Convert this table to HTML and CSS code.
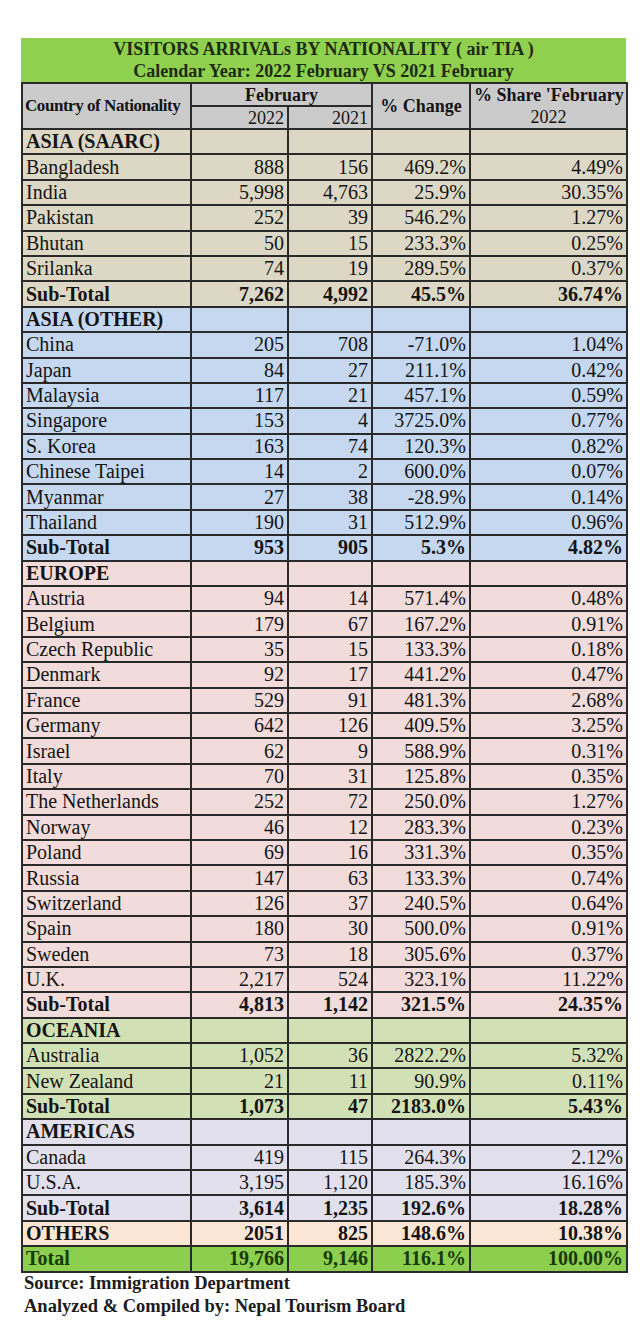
FILE: index.html
```html
<!DOCTYPE html>
<html>
<head>
<meta charset="utf-8">
<link rel="stylesheet" href="styles.css">
</head>
<body>
<div class="sheet">
  <div class="title">
    <div>VISITORS ARRIVALs BY NATIONALITY ( air TIA )</div>
    <div>Calendar Year: 2022 February VS 2021 February</div>
  </div>
  <table class="stats">
    <colgroup>
      <col class="c1"><col class="c2"><col class="c3"><col class="c4"><col class="c5">
    </colgroup>
    <thead>
      <tr class="h1">
        <th rowspan="2" class="left country">Country of Nationality</th>
        <th colspan="2" class="center">February</th>
        <th rowspan="2" class="center">% Change</th>
        <th rowspan="2" class="center share">% Share 'February<br><span class="yr">2022</span></th>
      </tr>
      <tr class="h2">
        <th class="num yr">2022</th>
        <th class="num yr">2021</th>
      </tr>
    </thead>
    <tbody class="saarc">
      <tr class="region"><td>ASIA (SAARC)</td><td></td><td></td><td></td><td></td></tr>
      <tr><td>Bangladesh</td><td>888</td><td>156</td><td>469.2%</td><td>4.49%</td></tr>
      <tr><td>India</td><td>5,998</td><td>4,763</td><td>25.9%</td><td>30.35%</td></tr>
      <tr><td>Pakistan</td><td>252</td><td>39</td><td>546.2%</td><td>1.27%</td></tr>
      <tr><td>Bhutan</td><td>50</td><td>15</td><td>233.3%</td><td>0.25%</td></tr>
      <tr><td>Srilanka</td><td>74</td><td>19</td><td>289.5%</td><td>0.37%</td></tr>
      <tr class="sub"><td>Sub-Total</td><td>7,262</td><td>4,992</td><td>45.5%</td><td>36.74%</td></tr>
    </tbody>
    <tbody class="asia">
      <tr class="region"><td>ASIA (OTHER)</td><td></td><td></td><td></td><td></td></tr>
      <tr><td>China</td><td>205</td><td>708</td><td>-71.0%</td><td>1.04%</td></tr>
      <tr><td>Japan</td><td>84</td><td>27</td><td>211.1%</td><td>0.42%</td></tr>
      <tr><td>Malaysia</td><td>117</td><td>21</td><td>457.1%</td><td>0.59%</td></tr>
      <tr><td>Singapore</td><td>153</td><td>4</td><td>3725.0%</td><td>0.77%</td></tr>
      <tr><td>S. Korea</td><td>163</td><td>74</td><td>120.3%</td><td>0.82%</td></tr>
      <tr><td>Chinese Taipei</td><td>14</td><td>2</td><td>600.0%</td><td>0.07%</td></tr>
      <tr><td>Myanmar</td><td>27</td><td>38</td><td>-28.9%</td><td>0.14%</td></tr>
      <tr><td>Thailand</td><td>190</td><td>31</td><td>512.9%</td><td>0.96%</td></tr>
      <tr class="sub"><td>Sub-Total</td><td>953</td><td>905</td><td>5.3%</td><td>4.82%</td></tr>
    </tbody>
    <tbody class="europe">
      <tr class="region"><td>EUROPE</td><td></td><td></td><td></td><td></td></tr>
      <tr><td>Austria</td><td>94</td><td>14</td><td>571.4%</td><td>0.48%</td></tr>
      <tr><td>Belgium</td><td>179</td><td>67</td><td>167.2%</td><td>0.91%</td></tr>
      <tr><td>Czech Republic</td><td>35</td><td>15</td><td>133.3%</td><td>0.18%</td></tr>
      <tr><td>Denmark</td><td>92</td><td>17</td><td>441.2%</td><td>0.47%</td></tr>
      <tr><td>France</td><td>529</td><td>91</td><td>481.3%</td><td>2.68%</td></tr>
      <tr><td>Germany</td><td>642</td><td>126</td><td>409.5%</td><td>3.25%</td></tr>
      <tr><td>Israel</td><td>62</td><td>9</td><td>588.9%</td><td>0.31%</td></tr>
      <tr><td>Italy</td><td>70</td><td>31</td><td>125.8%</td><td>0.35%</td></tr>
      <tr><td>The Netherlands</td><td>252</td><td>72</td><td>250.0%</td><td>1.27%</td></tr>
      <tr><td>Norway</td><td>46</td><td>12</td><td>283.3%</td><td>0.23%</td></tr>
      <tr><td>Poland</td><td>69</td><td>16</td><td>331.3%</td><td>0.35%</td></tr>
      <tr><td>Russia</td><td>147</td><td>63</td><td>133.3%</td><td>0.74%</td></tr>
      <tr><td>Switzerland</td><td>126</td><td>37</td><td>240.5%</td><td>0.64%</td></tr>
      <tr><td>Spain</td><td>180</td><td>30</td><td>500.0%</td><td>0.91%</td></tr>
      <tr><td>Sweden</td><td>73</td><td>18</td><td>305.6%</td><td>0.37%</td></tr>
      <tr><td>U.K.</td><td>2,217</td><td>524</td><td>323.1%</td><td>11.22%</td></tr>
      <tr class="sub"><td>Sub-Total</td><td>4,813</td><td>1,142</td><td>321.5%</td><td>24.35%</td></tr>
    </tbody>
    <tbody class="oceania">
      <tr class="region"><td>OCEANIA</td><td></td><td></td><td></td><td></td></tr>
      <tr><td>Australia</td><td>1,052</td><td>36</td><td>2822.2%</td><td>5.32%</td></tr>
      <tr><td>New Zealand</td><td>21</td><td>11</td><td>90.9%</td><td>0.11%</td></tr>
      <tr class="sub"><td>Sub-Total</td><td>1,073</td><td>47</td><td>2183.0%</td><td>5.43%</td></tr>
    </tbody>
    <tbody class="americas">
      <tr class="region"><td>AMERICAS</td><td></td><td></td><td></td><td></td></tr>
      <tr><td>Canada</td><td>419</td><td>115</td><td>264.3%</td><td>2.12%</td></tr>
      <tr><td>U.S.A.</td><td>3,195</td><td>1,120</td><td>185.3%</td><td>16.16%</td></tr>
      <tr class="sub"><td>Sub-Total</td><td>3,614</td><td>1,235</td><td>192.6%</td><td>18.28%</td></tr>
    </tbody>
    <tbody class="others">
      <tr class="sub"><td>OTHERS</td><td>2051</td><td>825</td><td>148.6%</td><td>10.38%</td></tr>
    </tbody>
    <tbody class="total">
      <tr class="sub"><td>Total</td><td>19,766</td><td>9,146</td><td>116.1%</td><td>100.00%</td></tr>
    </tbody>
  </table>
  <div class="notes">
    <div>Source: Immigration Department</div>
    <div>Analyzed &amp; Compiled by: Nepal Tourism Board</div>
  </div>
</div>
</body>
</html>
```

FILE: styles.css
```css
html, body {
  margin: 0;
  padding: 0;
  background: #ffffff;
}

body {
  font-family: "Liberation Serif", "Times New Roman", serif;
  color: #141414;
}

.sheet {
  padding: 38px 0 0 21px;
  width: 605px;
}

.title {
  background: #8fd14f;
  text-align: center;
  font-weight: bold;
  font-size: 18px;
  line-height: 22px;
  color: #1e2a14;
}

.stats {
  border-collapse: collapse;
  width: 605px;
  table-layout: fixed;
  font-size: 20px;
}

.c1 { width: 169px; }
.c2 { width: 97px; }
.c3 { width: 84px; }
.c4 { width: 98px; }
.c5 { width: 157px; }

.stats th,
.stats td {
  border: 2px solid #2a2a2a;
  padding: 0 3px 0 3px;
  line-height: 21px;
  height: 23.4px;
  white-space: nowrap;
  overflow: hidden;
}

.stats thead th {
  background: #cbcbcb;
  font-size: 18px;
  line-height: 20px;
  height: 20.6px;
  font-weight: bold;
}

.stats thead .left { text-align: left; }
.stats thead .country {
  font-size: 17px;
  letter-spacing: -0.45px;
  padding-left: 2px;
  padding-right: 0;
}
.stats thead .center { text-align: center; }
.stats thead .num { text-align: right; }
.stats thead .yr { font-weight: normal; }
.stats thead .share { line-height: 22px; }

.stats td:first-child { text-align: left; }
.stats td { text-align: right; }

.region td,
.sub td { font-weight: bold; }

.saarc td { background: #ddd8c6; }
.asia td { background: #c6d8ef; }
.europe td { background: #f1dcdb; }
.oceania td { background: #d2e1b5; }
.americas td { background: #e3e0ed; }
.others td { background: #fbe6d6; }
.total td { background: #8cce4e; color: #17390b; }

.notes {
  font-weight: bold;
  font-size: 18.5px;
  line-height: 23px;
  margin-top: -1px;
  padding: 0 0 0 3px;
  color: #1c1c1c;
}
```
